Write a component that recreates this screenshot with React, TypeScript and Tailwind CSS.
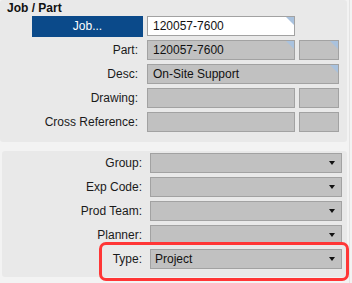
import React from 'react';

const font = { fontFamily: '"Liberation Sans", Arial, sans-serif' };

const Corner = () => (
  <svg className="absolute right-0 top-0" width="8" height="8" viewBox="0 0 8 8">
    <polygon points="0,0 8,0 8,8" fill="#a9c2de" />
  </svg>
);

const Field = ({
  value,
  width,
  white,
  corner,
}: {
  value?: string;
  width: string;
  white?: boolean;
  corner?: boolean;
}) => (
  <div
    className={`relative flex h-[20px] items-center overflow-hidden border border-[#a2a2a2] pl-[5px] text-[12px] text-[#111] ${width} ${
      white ? 'bg-white' : 'bg-[#c1c1c1]'
    }`}
  >
    {value}
    {corner && <Corner />}
  </div>
);

const Select = ({ value }: { value?: string }) => (
  <div className="flex h-[20px] w-[192px] items-center justify-between border border-[#a2a2a2] bg-[#c1c1c1] pl-[4px] pr-[6px] text-[12px] text-[#111]">
    <span>{value}</span>
    <svg width="6" height="4" viewBox="0 0 6 4">
      <polygon points="0,0 6,0 3,4" fill="#111" />
    </svg>
  </div>
);

const Label = ({ text, w }: { text: string; w: string }) => (
  <div className={`${w} shrink-0 text-right text-[12px] text-[#1a1a1a]`}>{text}</div>
);

export default function App() {
  return (
    <div className="relative flex h-[283px] w-[352px] bg-[#f3f3f3]" style={font}>
      <div className="flex w-[347px] flex-col">
        {/* Job / Part */}
        <div className="flex h-[142px] w-[347px] flex-col gap-[4px] rounded-[3px] bg-[#e9e9e9] pt-[1px]">
          <div className="-mb-[4px] h-[15px] pl-[7px] text-[12px] font-bold leading-[15px] text-[#111]">
            Job / Part
          </div>
          <div className="flex h-[20px] items-center pl-[32px]">
            <button className="h-[21px] w-[111px] bg-[#0b4a8a] text-[12px] text-white">Job...</button>
            <div className="ml-[4px]">
              <Field value="120057-7600" width="w-[148px]" white corner />
            </div>
          </div>
          <div className="flex h-[20px] items-center">
            <Label text="Part:" w="w-[138px]" />
            <div className="ml-[9px] flex gap-[4px]">
              <Field value="120057-7600" width="w-[148px]" corner />
              <Field width="w-[40px]" corner />
            </div>
          </div>
          <div className="flex h-[20px] items-center">
            <Label text="Desc:" w="w-[138px]" />
            <div className="ml-[9px]">
              <Field value="On-Site Support" width="w-[192px]" corner />
            </div>
          </div>
          <div className="flex h-[20px] items-center">
            <Label text="Drawing:" w="w-[138px]" />
            <div className="ml-[9px] flex gap-[4px]">
              <Field width="w-[148px]" />
              <Field width="w-[40px]" />
            </div>
          </div>
          <div className="flex h-[20px] items-center">
            <Label text="Cross Reference:" w="w-[138px]" />
            <div className="ml-[9px] flex gap-[4px]">
              <Field width="w-[148px]" />
              <Field width="w-[40px]" />
            </div>
          </div>
        </div>

        {/* Classification */}
        <div className="ml-[2px] mt-[9px] flex h-[126px] w-[345px] flex-col gap-[4px] rounded-[3px] bg-[#e9e9e9] pt-[2px]">
          {[
            ['Group:', ''],
            ['Exp Code:', ''],
            ['Prod Team:', ''],
            ['Planner:', ''],
            ['Type:', 'Project'],
          ].map(([label, value]) => (
            <div key={label} className="flex h-[20px] items-center">
              <Label text={label} w="w-[140px]" />
              <div className="ml-[8px]">
                <Select value={value} />
              </div>
            </div>
          ))}
        </div>
      </div>
      <div className="ml-[2px] w-[1px] bg-[#e3e3e3]" />

      {/* highlight */}
      <div className="absolute left-[99px] top-[242px] h-[39px] w-[250px] rounded-[7px] border-[3px] border-[#ff3636]" />
    </div>
  );
}
